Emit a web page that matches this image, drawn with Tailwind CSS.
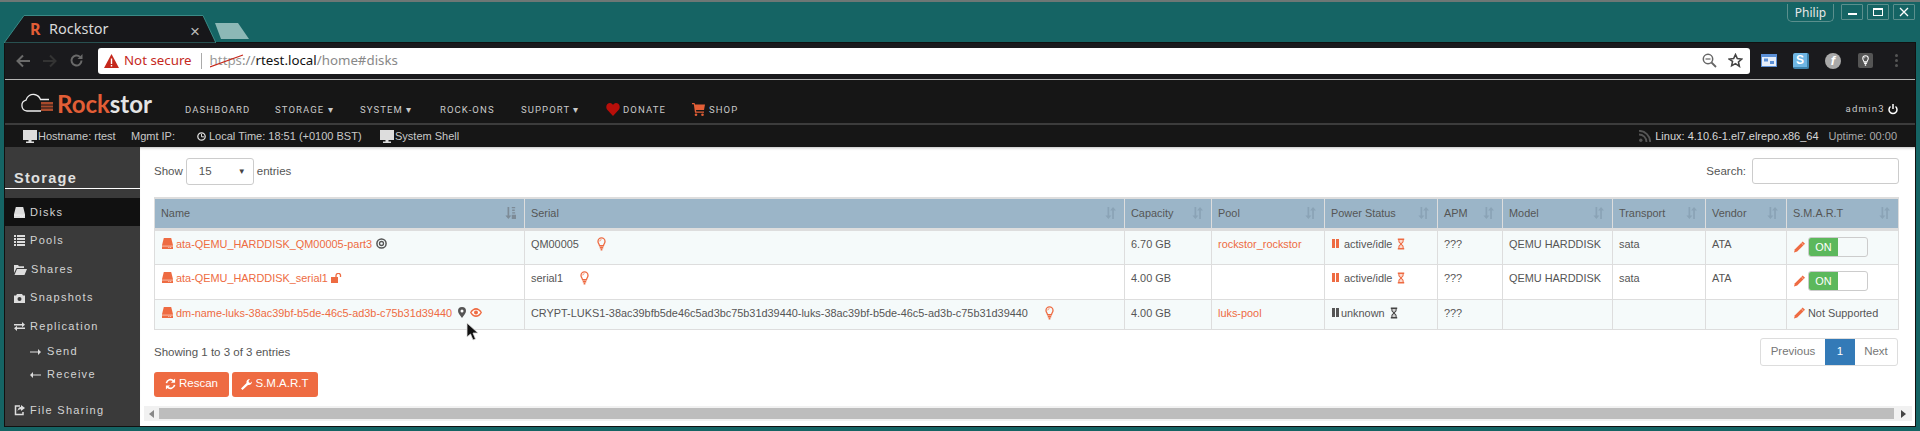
<!DOCTYPE html>
<html>
<head>
<meta charset="utf-8">
<script src="https://cdn.jsdelivr.net/npm/@tailwindcss/browser@4"></script>
</head>
<body class="m-0 bg-[#156464] font-['Liberation_Sans',sans-serif]">
<svg width="0" height="0" class="absolute">
  <defs>
    <symbol id="hdd" viewBox="0 0 12 12"><path d="M2 0h8l2 8v4H0V8z" fill="currentColor"/><path d="M0 8.400h12v.8H0z" fill="#fff" opacity=".75"/><path d="M9 10h1v1H9zM7 10h1v1H7z" fill="#fff"/></symbol>
    <symbol id="bulb" viewBox="0 0 10 16"><path d="M5 1a4 4 0 0 0-4 4c0 2 1.400 3 1.800 5h4.400C7.600 8 9 7 9 5a4 4 0 0 0-4-4z" fill="none" stroke="currentColor" stroke-width="1.500"/><path d="M3 11h4v2H3zM4 13.500h2V15.500H4z" fill="currentColor"/><path d="M5 3a2 2 0 0 0-2 2" fill="none" stroke="currentColor" stroke-width=".8"/></symbol>
    <symbol id="glass" viewBox="0 0 10 15"><path d="M1 .5h8v2H8.300v1.500C8.300 6 6 6.800 6 7.500S8.300 9 8.300 11v1.500H9v2H1v-2h.7V11C1.700 9 4 8.200 4 7.500S1.700 6 1.700 4V2.500H1z" fill="currentColor"/><path d="M3 2.500h4V4c0 1.200-2 2-2 2.500C5 6 3 5.200 3 4zM5 8.500c0 .5 2 1.300 2 2.500v1.500H3V11c0-1.200 2-2 2-2.500z" fill="#fff" opacity=".75"/></symbol>
    <symbol id="pencil" viewBox="0 0 12 12"><path d="M9.500 0L12 2.500 3.500 11 0 12l1-3.500z" fill="currentColor"/><path d="M8 1.500l2.500 2.500" stroke="#fff" stroke-width=".6"/></symbol>
    <symbol id="sort" viewBox="0 0 13 14"><path d="M3 0h2v10h2.500L4 14 .5 10H3z" fill="currentColor"/><path d="M8.500 14h2V4H13L9.500 0 6 4h2.500z" fill="currentColor"/></symbol>
    <symbol id="sortalpha" viewBox="0 0 13 14"><path d="M3 0h2v10h2.500L4 14 .5 10H3z" fill="currentColor"/><path d="M8 0h4v1.500H8zM8.500 3h3v1.500h-3zM8.500 6h3.500v1.500H8.500zM8 9h5v5H8z" fill="currentColor"/></symbol>
    <symbol id="monitor" viewBox="0 0 14 13"><path d="M0 0h14v10H8.500v1.500H11V13H3v-1.500h2.500V10H0z" fill="currentColor"/></symbol>
  </defs>
</svg>
<div class="w-[1920px] h-[431px] overflow-hidden flex flex-col border-t-2 border-t-[#6d7775] bg-[#156464]">

  <!-- title strip -->
  <div class="h-[41px] shrink-0 flex items-start pl-[4px] pr-[5px] relative">
    <div class="relative w-[212px] h-[28px] mt-[13px] flex items-center pl-[26px] text-[#e8e8e8]">
      <svg class="absolute left-0 top-0" width="212" height="28" viewBox="0 0 212 28"><path d="M0 28 L20 0.500 H199 L212 28 Z" fill="#17171a" stroke="#3a8a86"/></svg>
      <span class="relative w-[19px] font-['Noto_Sans',sans-serif] font-bold text-[16px] text-[#e25e36]">R</span>
      <span class="relative font-['Noto_Sans',sans-serif] text-[14.500px] text-[#d9d9d9]">Rockstor</span>
      <span class="absolute left-[186px] top-[4px] text-[#bbb] text-[17px]">×</span>
    </div>
    <svg class="ml-[-2px] mt-[21px]" width="36" height="16" viewBox="0 0 36 16"><path d="M1 0H24L35 16H7Z" fill="#8cb8b6"/></svg>
    <div class="ml-auto flex items-start gap-[4px] text-[#e8e8e8] mt-[2px]">
      <div class="w-[47px] h-[18px] border border-t-0 border-[#5b8f8d] rounded-b-[5px] text-[12px] flex items-center justify-center mr-[3px] font-['Noto_Sans',sans-serif]">Philip</div>
      <div class="w-[22px] h-[16px] border border-[#5b8f8d] flex items-center justify-center rounded-[1px]"><span class="w-[9px] h-[2px] bg-white mt-[4px]"></span></div>
      <div class="w-[22px] h-[16px] border border-[#5b8f8d] flex items-center justify-center rounded-[1px]"><span class="w-[10px] h-[8px] border border-white border-t-2"></span></div>
      <div class="w-[22px] h-[16px] border border-[#5b8f8d] flex items-center justify-center rounded-[1px]"><svg width="10" height="10" viewBox="0 0 10 10"><path d="M1 1l8 8M9 1l-8 8" stroke="#fff" stroke-width="1.300"/></svg></div>
    </div>
  </div>

  <!-- window body -->
  <div class="flex-1 mx-[5px] mb-[5px] flex flex-col bg-[#3a3a3a] min-h-0 outline-1 outline-[#111]">
    <!-- toolbar -->
    <div class="h-[37px] shrink-0 bg-[#1a1a1d] flex items-center border-b border-b-[#b5b5b5] pb-[1px]">
      <div class="w-[93px] flex items-center pl-[10px] gap-[11px] text-[#666]">
        <svg width="16" height="14" viewBox="0 0 16 14"><path d="M15 7H3M8 1.500L2.500 7 8 12.500" fill="none" stroke="#6a6a6a" stroke-width="2"/></svg>
        <svg width="16" height="14" viewBox="0 0 16 14"><path d="M1 7h12M8 1.500L13.500 7 8 12.500" fill="none" stroke="#333" stroke-width="2"/></svg>
        <svg width="15" height="15" viewBox="0 0 15 15"><path d="M12.500 7.500a5 5 0 1 1-1.500-3.600" fill="none" stroke="#6a6a6a" stroke-width="2"/><path d="M13.500 1v5h-5z" fill="#6a6a6a"/></svg>
      </div>
      <div class="w-[1652px] h-[26px] bg-white rounded-[3px] flex items-center pl-[6px] pr-[7px] font-['Noto_Sans',sans-serif] text-[13.300px]">
        <svg width="15" height="14" viewBox="0 0 15 14"><path d="M7.500 0L15 14H0z" fill="#c5281c"/><path d="M6.800 4.500h1.400V10H6.800zM6.800 11h1.400v1.500H6.800z" fill="#fff"/></svg>
        <span class="text-[#c5281c] ml-[5px]">Not secure</span>
        <span class="w-[1px] h-[16px] bg-[#aaa] ml-[9px] mr-[8px]"></span>
        <span class="relative text-[#999]">https<svg class="absolute left-0 top-[3px]" width="34" height="14" viewBox="0 0 34 14"><path d="M0 13L33 1" stroke="#c5281c" stroke-width="1.200"/></svg></span><span class="text-[#888]">://</span><span class="text-[#111]">rtest.local</span><span class="text-[#888]">/home#disks</span>
        <div class="ml-auto flex items-center gap-[11px]">
          <svg width="15" height="15" viewBox="0 0 15 15"><circle cx="6" cy="6" r="4.700" fill="none" stroke="#666" stroke-width="1.500"/><path d="M9.500 9.500L14 14" stroke="#666" stroke-width="1.800"/><path d="M3.500 6h5" stroke="#666" stroke-width="1.200"/></svg>
          <svg width="15" height="15" viewBox="0 0 24 24"><path d="M12 2.500l2.900 6.400 7 .8-5.200 4.700 1.500 6.900L12 17l-6.200 3.300 1.500-6.900L2 9.700l7-.8z" fill="none" stroke="#444" stroke-width="2.500"/></svg>
        </div>
      </div>
      <div class="flex-1 flex items-center pl-[11px]">
        <svg width="16" height="13" viewBox="0 0 16 13"><path d="M0 0h16v13H0z" fill="#5b8fd6"/><path d="M1 3h14v9H1z" fill="#e6eefa"/><path d="M3 4.500h4v3H3zM9 7h4v3H9z" fill="#5b8fd6"/></svg>
        <div class="w-[16px] h-[16px] ml-[16px] bg-[#6fb6e4] rounded-[2px] border-r-2 border-b-2 border-[#3f83ad] text-white text-[12px] font-bold flex items-center justify-center">S</div>
        <div class="w-[16px] h-[16px] ml-[16px] bg-[#a9a9a9] rounded-full text-white text-[13px] font-bold italic flex items-center justify-center">f</div>
        <div class="w-[15px] h-[15px] ml-[17px] bg-[#555] rounded-[2px] flex items-center justify-center"><svg class="text-white" width="7" height="11"><use href="#bulb"/></svg></div>
        <div class="ml-[22px] flex flex-col gap-[2px]"><span class="w-[3px] h-[3px] bg-[#555] rounded-full"></span><span class="w-[3px] h-[3px] bg-[#555] rounded-full"></span><span class="w-[3px] h-[3px] bg-[#555] rounded-full"></span></div>
      </div>
    </div>

    <!-- nav -->
    <div class="h-[45px] shrink-0 bg-[#161616] border-b-2 border-b-[#3c3c3c] flex items-center relative text-[#c9c9c9] text-[9.500px] tracking-[1.100px] font-['Roboto',sans-serif]">
      <svg class="ml-[15px] mt-[3px]" width="34" height="20" viewBox="0 0 34 20"><path d="M21 18H7a5.500 5.500 0 0 1-1-10.800C7 3 11 0.800 14.500 1.500c3 .5 5 2.500 6 5H29" fill="none" stroke="#eee" stroke-width="1.300"/><path d="M21 9h12v9H21z" fill="#a84a2c"/><path d="M21 12h12M21 15h12" stroke="#161616"/></svg>
      <span class="ml-[3px] mt-[4px] font-['Lato',sans-serif] font-bold text-[24px] tracking-normal"><span class="text-[#e25e36]">Rock</span><span class="text-[#e4e4e4]">stor</span></span>
      <div class="absolute left-[180px] top-[23px] flex items-center leading-[12px]">
        <span class="w-[90px]">DASHBOARD</span>
        <span class="w-[85px]">STORAGE ▾</span>
        <span class="w-[80px]">SYSTEM ▾</span>
        <span class="w-[81px]">ROCK-ONS</span>
        <span class="w-[85px]">SUPPORT ▾</span>
        <span class="w-[86px] flex items-center gap-[3px]"><svg width="14" height="13" viewBox="0 0 14 13"><path d="M7 13L1 6.500C-1 3 1.500 0 4 0c1.500 0 2.500 1 3 2 .5-1 1.500-2 3-2 2.500 0 5 3 3 6.500z" fill="#b80f0a"/></svg>DONATE</span>
        <span class="flex items-center gap-[4px]"><svg width="13" height="13" viewBox="0 0 13 13"><path d="M0 0h2.500l.6 1.500H13l-1 5.500H4l.3 1.500H12v1.200H3L1.800 1.200H0z" fill="#e25e36"/><circle cx="4" cy="11.700" r="1.300" fill="#e25e36"/><circle cx="10.500" cy="11.700" r="1.300" fill="#e25e36"/></svg>SHOP</span>
      </div>
      <div class="absolute right-[17px] top-[23px] flex items-center gap-[3px] leading-[12px] tracking-[1.300px]"><span>admin3</span><svg width="10" height="11" viewBox="0 0 10 11"><path d="M2.500 2.500a4 4 0 1 0 5 0" fill="none" stroke="#fff" stroke-width="1.500"/><path d="M5 0v5" stroke="#fff" stroke-width="1.500"/></svg></div>
    </div>

    <!-- status -->
    <div class="h-[22px] shrink-0 bg-[#161616] flex items-center text-[#c9c9c9] text-[11px] pl-[18px] pr-[18px]">
      <svg class="text-[#ddd] mr-[1px]" width="14" height="13"><use href="#monitor"/></svg>
      <span class="w-[93px]">Hostname: rtest</span>
      <span class="w-[66px]">Mgmt IP:</span>
      <svg class="mr-[3px]" width="9" height="9" viewBox="0 0 9 9"><circle cx="4.500" cy="4.500" r="3.700" fill="none" stroke="#ddd" stroke-width="1.300"/><path d="M4.500 2v2.800H7" fill="none" stroke="#ddd"/></svg>
      <span class="w-[171px]">Local Time: 18:51 (+0100 BST)</span>
      <svg class="text-[#ddd] mr-[1px]" width="14" height="13"><use href="#monitor"/></svg>
      <span>System Shell</span>
      <div class="ml-auto flex items-center">
        <svg width="12" height="12" viewBox="0 0 12 12"><circle cx="1.800" cy="10.200" r="1.700" fill="#555"/><path d="M0 4.500A7.500 7.500 0 0 1 7.500 12M0 .8A11.200 11.200 0 0 1 11.200 12" fill="none" stroke="#555" stroke-width="1.800"/></svg>
        <span class="ml-[4px] text-[#d8d8d8]">Linux: 4.10.6-1.el7.elrepo.x86_64</span>
        <span class="ml-[10px] text-[#aaa]">Uptime: 00:00</span>
      </div>
    </div>

    <!-- main -->
    <div class="flex-1 flex min-h-0">
      <!-- sidebar -->
      <div class="w-[135px] shrink-0 bg-[#3a3a3a] text-[#d4d4d4] text-[11px] tracking-[1.300px]">
        <div class="h-[42px] border-b border-b-white flex items-end pl-[9px] leading-[20px] text-[14.500px] font-bold tracking-[1.300px] text-[#e0e0e0]">Storage</div>
        <div class="mt-[9px] h-[28px] bg-[#111] flex items-center pl-[9px] gap-[5px]"><svg class="text-[#ddd]" width="11" height="11"><use href="#hdd"/></svg><span>Disks</span></div>
        <div class="h-[29px] flex items-center pl-[9px] gap-[5px]"><svg width="11" height="11" viewBox="0 0 11 11"><path d="M0 0h2v2H0zM3 0h8v2H3zM0 3h2v2H0zM3 3h8v2H3zM0 6h2v2H0zM3 6h8v2H3zM0 9h2v2H0zM3 9h8v2H3z" fill="#ddd"/></svg><span>Pools</span></div>
        <div class="h-[28px] flex items-center pl-[9px] gap-[4px]"><svg width="13" height="11" viewBox="0 0 13 11"><path d="M0 1h4l1 1.200h5V4H2.500L0 9zM3 5h10l-2.500 6H.5z" fill="#ddd"/></svg><span>Shares</span></div>
        <div class="h-[29px] flex items-center pl-[9px] gap-[5px]"><svg width="11" height="10" viewBox="0 0 11 10"><path d="M3 1h5l1 1.500h2V10H0V2.500h2z" fill="#ddd"/><circle cx="5.500" cy="6" r="2" fill="#3a3a3a"/></svg><span>Snapshots</span></div>
        <div class="h-[28px] flex items-center pl-[9px] gap-[5px]"><svg width="11" height="9" viewBox="0 0 11 9"><path d="M0 2h8V0l3 2.700-3 2.600V3.400H0zM11 7H3v2L0 6.300l3-2.600v1.900h8z" fill="#ddd"/></svg><span>Replication</span></div>
        <div class="h-[23px] flex items-center pl-[25px] gap-[6px]"><svg width="11" height="6" viewBox="0 0 11 6"><path d="M0 2.400h8V0l3 3-3 3V3.600H0z" fill="#ddd"/></svg><span>Send</span></div>
        <div class="h-[23px] flex items-center pl-[25px] gap-[6px]"><svg width="11" height="6" viewBox="0 0 11 6"><path d="M11 2.400H3V0L0 3l3 3V3.600h8z" fill="#ddd"/></svg><span>Receive</span></div>
        <div class="mt-[10px] h-[28px] flex items-center pl-[9px] gap-[5px]"><svg width="11" height="11" viewBox="0 0 11 11"><path d="M6 1H1.500v8.500H9V7" fill="none" stroke="#ddd" stroke-width="1.500"/><path d="M7 0l4 3-4 3V4.300C5 4.300 4 5 3.500 6.500 3.500 4 5 2 7 1.800z" fill="#ddd"/></svg><span>File Sharing</span></div>
      </div>

      <!-- content -->
      <div class="flex-1 min-w-0 bg-white text-[#555] text-[11.500px] relative shadow-[inset_0_3px_3px_-2px_rgba(0,0,0,0.25)]">
        <div class="h-[50px] flex items-start pl-[14px] pr-[16px] pt-[11px]">
          <span class="mt-[5px]">Show</span>
          <div class="ml-[3px] w-[68px] h-[27px] border border-[#ccc] rounded-[3px] flex items-center pl-[12px] pr-[7px] text-[#555]">15<span class="ml-auto text-[8px] text-[#444]">▼</span></div>
          <span class="ml-[3px] mt-[5px]">entries</span>
          <span class="ml-auto mt-[5px]">Search:</span>
          <div class="ml-[6px] w-[147px] h-[26px] border border-[#ccc] rounded-[3px]"></div>
        </div>
        <table class="ml-[14px] w-[1744px] table-fixed border-collapse text-[10.900px] leading-[14px]">
          <thead class="bg-[#9bb5c8] text-[#555]">
            <tr class="h-[31px] border-t-2 border-t-[#ddd] border-b-[3px] border-b-[#ddd]">
              <th class="w-[370px] font-normal text-left pl-[6px] border border-[#ddd] border-b-[3px]"><div class="flex items-center pr-[8px]">Name<svg class="ml-auto text-[#7d8b97]" width="11" height="12"><use href="#sortalpha"/></svg></div></th>
              <th class="w-[600px] font-normal text-left pl-[6px] border border-[#ddd] border-b-[3px]"><div class="flex items-center pr-[8px]">Serial<svg class="ml-auto text-[#8aa3b6]" width="11" height="12"><use href="#sort"/></svg></div></th>
              <th class="w-[87px] font-normal text-left pl-[6px] border border-[#ddd] border-b-[3px]"><div class="flex items-center pr-[8px]">Capacity<svg class="ml-auto text-[#8aa3b6]" width="11" height="12"><use href="#sort"/></svg></div></th>
              <th class="w-[113px] font-normal text-left pl-[6px] border border-[#ddd] border-b-[3px]"><div class="flex items-center pr-[8px]">Pool<svg class="ml-auto text-[#8aa3b6]" width="11" height="12"><use href="#sort"/></svg></div></th>
              <th class="w-[113px] font-normal text-left pl-[6px] border border-[#ddd] border-b-[3px]"><div class="flex items-center pr-[8px]">Power Status<svg class="ml-auto text-[#8aa3b6]" width="11" height="12"><use href="#sort"/></svg></div></th>
              <th class="w-[65px] font-normal text-left pl-[6px] border border-[#ddd] border-b-[3px]"><div class="flex items-center pr-[8px]">APM<svg class="ml-auto text-[#8aa3b6]" width="11" height="12"><use href="#sort"/></svg></div></th>
              <th class="w-[110px] font-normal text-left pl-[6px] border border-[#ddd] border-b-[3px]"><div class="flex items-center pr-[8px]">Model<svg class="ml-auto text-[#8aa3b6]" width="11" height="12"><use href="#sort"/></svg></div></th>
              <th class="w-[93px] font-normal text-left pl-[6px] border border-[#ddd] border-b-[3px]"><div class="flex items-center pr-[8px]">Transport<svg class="ml-auto text-[#8aa3b6]" width="11" height="12"><use href="#sort"/></svg></div></th>
              <th class="w-[81px] font-normal text-left pl-[6px] border border-[#ddd] border-b-[3px]"><div class="flex items-center pr-[8px]">Vendor<svg class="ml-auto text-[#8aa3b6]" width="11" height="12"><use href="#sort"/></svg></div></th>
              <th class="w-[112px] font-normal text-left pl-[6px] border border-[#ddd] border-b-[3px]"><div class="flex items-center pr-[8px]">S.M.A.R.T<svg class="ml-auto text-[#8aa3b6]" width="11" height="12"><use href="#sort"/></svg></div></th>
            </tr>
          </thead>
          <tbody>
            <tr class="h-[35px] bg-[#f5fafa]">
              <td class="border border-[#ddd] align-top pl-[7px] pt-[6px] text-[#ee6b42]"><div class="flex items-center"><svg class="mr-[3px]" width="11" height="11"><use href="#hdd"/></svg>ata-QEMU_HARDDISK_QM00005-part3<svg class="ml-[4px] text-[#555]" width="11" height="11" viewBox="0 0 11 11"><circle cx="5.500" cy="5.500" r="4.600" fill="none" stroke="#555" stroke-width="1.500"/><circle cx="5.500" cy="5.500" r="2" fill="none" stroke="#555" stroke-width="1.300"/></svg></div></td>
              <td class="border border-[#ddd] align-top pl-[6px] pt-[6px]"><div class="flex items-center h-[14px]">QM00005<svg class="ml-[18px] text-[#ee6b42]" width="9" height="14"><use href="#bulb"/></svg></div></td>
              <td class="border border-[#ddd] align-top pl-[6px] pt-[6px]">6.70 GB</td>
              <td class="border border-[#ddd] align-top pl-[6px] pt-[6px] text-[#ee6b42]">rockstor_rockstor</td>
              <td class="border border-[#ddd] align-top pl-[7px] pt-[6px]"><div class="flex items-center"><svg class="mr-[5px]" width="7" height="9" viewBox="0 0 7 10" preserveAspectRatio="none"><path d="M0 0h3v10H0zM4 0h3v10H4z" fill="#ee6b42"/></svg>active/idle<svg class="ml-[5px] text-[#ee6b42]" width="8" height="12"><use href="#glass"/></svg></div></td>
              <td class="border border-[#ddd] align-top pl-[6px] pt-[6px]">???</td>
              <td class="border border-[#ddd] align-top pl-[6px] pt-[6px]">QEMU HARDDISK</td>
              <td class="border border-[#ddd] align-top pl-[6px] pt-[6px]">sata</td>
              <td class="border border-[#ddd] align-top pl-[6px] pt-[6px]">ATA</td>
              <td class="border border-[#ddd] align-top pl-[7px] pt-[6px]"><div class="flex items-center"><svg class="text-[#ee6b42]" width="11" height="12"><use href="#pencil"/></svg><div class="ml-[3px] w-[60px] h-[20px] border border-[#ccc] rounded-[3px] flex"><span class="w-[29px] bg-[#5cb85c] text-white flex items-center justify-center rounded-l-[2px]">ON</span></div></div></td>
            </tr>
            <tr class="h-[35px] bg-white">
              <td class="border border-[#ddd] align-top pl-[7px] pt-[6px] text-[#ee6b42]"><div class="flex items-center"><svg class="mr-[3px]" width="11" height="11"><use href="#hdd"/></svg>ata-QEMU_HARDDISK_serial1<svg class="ml-[3px]" width="11" height="10" viewBox="0 0 11 10"><path d="M0 4h7v6H0z" fill="#ee6b42"/><path d="M5 4V2.500a2.300 2.300 0 0 1 4.500-.5V4" fill="none" stroke="#ee6b42" stroke-width="1.300"/></svg></div></td>
              <td class="border border-[#ddd] align-top pl-[6px] pt-[6px]"><div class="flex items-center h-[14px]">serial1<svg class="ml-[17px] text-[#ee6b42]" width="9" height="14"><use href="#bulb"/></svg></div></td>
              <td class="border border-[#ddd] align-top pl-[6px] pt-[6px]">4.00 GB</td>
              <td class="border border-[#ddd]"></td>
              <td class="border border-[#ddd] align-top pl-[7px] pt-[6px]"><div class="flex items-center"><svg class="mr-[5px]" width="7" height="9" viewBox="0 0 7 10" preserveAspectRatio="none"><path d="M0 0h3v10H0zM4 0h3v10H4z" fill="#ee6b42"/></svg>active/idle<svg class="ml-[5px] text-[#ee6b42]" width="8" height="12"><use href="#glass"/></svg></div></td>
              <td class="border border-[#ddd] align-top pl-[6px] pt-[6px]">???</td>
              <td class="border border-[#ddd] align-top pl-[6px] pt-[6px]">QEMU HARDDISK</td>
              <td class="border border-[#ddd] align-top pl-[6px] pt-[6px]">sata</td>
              <td class="border border-[#ddd] align-top pl-[6px] pt-[6px]">ATA</td>
              <td class="border border-[#ddd] align-top pl-[7px] pt-[6px]"><div class="flex items-center"><svg class="text-[#ee6b42]" width="11" height="12"><use href="#pencil"/></svg><div class="ml-[3px] w-[60px] h-[20px] border border-[#ccc] rounded-[3px] flex"><span class="w-[29px] bg-[#5cb85c] text-white flex items-center justify-center rounded-l-[2px]">ON</span></div></div></td>
            </tr>
            <tr class="h-[30px] bg-[#f5fafa]">
              <td class="border border-[#ddd] align-top pl-[7px] pt-[6px] text-[#ee6b42]"><div class="flex items-center"><svg class="mr-[3px]" width="11" height="11"><use href="#hdd"/></svg>dm-name-luks-38ac39bf-b5de-46c5-ad3b-c75b31d39440<svg class="ml-[6px]" width="8" height="11" viewBox="0 0 8 11"><path d="M4 0a4 4 0 0 1 4 4c0 2-2.500 5-4 7-1.500-2-4-5-4-7a4 4 0 0 1 4-4z" fill="#555"/><circle cx="4" cy="4" r="1.500" fill="#fff"/></svg><svg class="ml-[4px]" width="12" height="9" viewBox="0 0 12 9"><path d="M0 4.500C1.500 1.500 4 0 6 0s4.500 1.500 6 4.500C10.500 7.500 8 9 6 9S1.500 7.500 0 4.500z" fill="#ee6b42"/><path d="M1.500 4.500C3 2.500 4.500 1.800 6 1.800s3 .7 4.500 2.700C9 6.500 7.500 7.300 6 7.300S3 6.500 1.500 4.500z" fill="#fff"/><circle cx="6" cy="4.500" r="2" fill="#ee6b42"/></svg></div></td>
              <td class="border border-[#ddd] align-top pl-[6px] pt-[6px]"><div class="flex items-center h-[14px] whitespace-nowrap">CRYPT-LUKS1-38ac39bfb5de46c5ad3bc75b31d39440-luks-38ac39bf-b5de-46c5-ad3b-c75b31d39440<svg class="ml-[17px] text-[#ee6b42]" width="9" height="14"><use href="#bulb"/></svg></div></td>
              <td class="border border-[#ddd] align-top pl-[6px] pt-[6px]">4.00 GB</td>
              <td class="border border-[#ddd] align-top pl-[6px] pt-[6px] text-[#ee6b42]">luks-pool</td>
              <td class="border border-[#ddd] align-top pl-[7px] pt-[6px]"><div class="flex items-center"><svg class="mr-[2px]" width="7" height="9" viewBox="0 0 7 10" preserveAspectRatio="none"><path d="M0 0h3v10H0zM4 0h3v10H4z" fill="#555"/></svg>unknown<svg class="ml-[5px] text-[#444]" width="8" height="12"><use href="#glass"/></svg></div></td>
              <td class="border border-[#ddd] align-top pl-[6px] pt-[6px]">???</td>
              <td class="border border-[#ddd]"></td>
              <td class="border border-[#ddd]"></td>
              <td class="border border-[#ddd]"></td>
              <td class="border border-[#ddd] align-top pl-[7px] pt-[6px]"><div class="flex items-center whitespace-nowrap"><svg class="text-[#ee6b42] mr-[3px]" width="11" height="12"><use href="#pencil"/></svg>Not Supported</div></td>
            </tr>
          </tbody>
        </table>
        <div class="flex items-start pl-[14px] pr-[17px] mt-[8px]">
          <span class="mt-[6px]">Showing 1 to 3 of 3 entries</span>
          <div class="ml-auto h-[28px] flex border border-[#ddd] rounded-[3px] text-[#777]">
            <span class="w-[64px] flex items-center justify-center">Previous</span>
            <span class="w-[30px] bg-[#337ab7] text-white flex items-center justify-center">1</span>
            <span class="flex-1 w-[42px] flex items-center justify-center">Next</span>
          </div>
        </div>
        <div class="flex gap-[3px] pl-[14px] mt-[6px] text-white">
          <div class="w-[75px] h-[25px] bg-[#ee6b42] rounded-[3px] flex items-center justify-center gap-[3px]"><svg width="11" height="12" viewBox="0 0 12 12"><path d="M1.500 5a4.700 4.700 0 0 1 8-2.300M10.500 7a4.700 4.700 0 0 1-8 2.300" fill="none" stroke="#fff" stroke-width="1.800"/><path d="M11 0v4.500H6.500zM1 12V7.500h4.500z" fill="#fff"/></svg>Rescan</div>
          <div class="w-[86px] h-[25px] bg-[#ee6b42] rounded-[3px] flex items-center justify-center gap-[3px]"><svg width="11" height="11" viewBox="0 0 11 11"><path d="M0 9.500L5.500 4C5 2 6.500 0 9 0L7.500 2l.5 1.500 1.500.5 1.500-1.500C11 5 9 6.500 7 6L1.500 11z" fill="#fff"/></svg>S.M.A.R.T</div>
        </div>
        <div class="absolute left-[4px] right-[3px] bottom-[5px] h-[15px] bg-[#f1f1f1] flex items-center">
          <span class="w-[15px] flex justify-center"><span class="border-y-[4px] border-y-transparent border-r-[5px] border-r-[#888]"></span></span>
          <div class="flex-1 h-[11px] bg-[#bdbdbd]"></div>
          <span class="w-[18px] flex justify-center"><span class="border-y-[4px] border-y-transparent border-l-[5px] border-l-[#444]"></span></span>
        </div>
        <svg class="absolute left-[326px] top-[175px]" width="13" height="19" viewBox="0 0 13 19"><path d="M1 1v14l3.500-3 2.500 6 2.500-1-2.500-6h5z" fill="#111" stroke="#ddd" stroke-width=".8"/></svg>
      </div>
    </div>
  </div>
</div>
</body>
</html>
